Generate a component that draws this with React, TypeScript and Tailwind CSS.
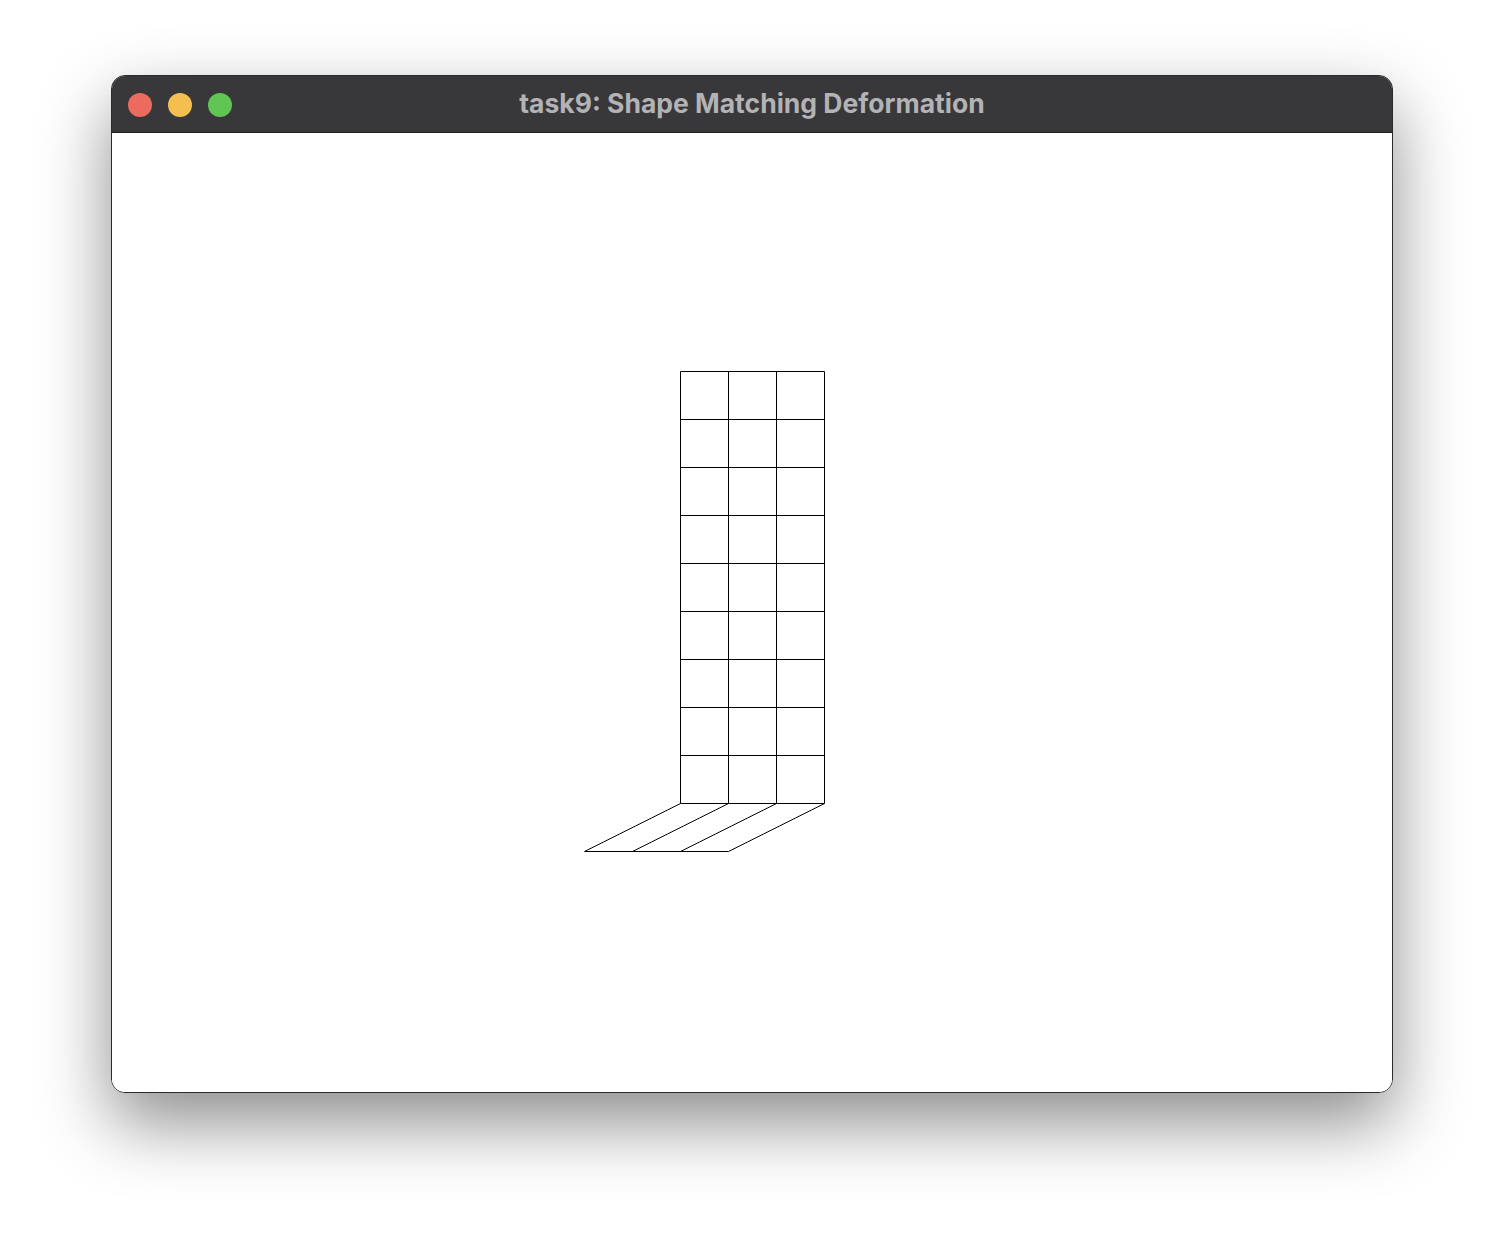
import * as React from 'react';

// Grid geometry, in the content area's own coordinates
const cell = 48;
const left = 568.5;
const top = 238.5;
const cols = 3;
const rows = 9;
const shearX = -96;

function Mesh() {
  const bottom = top + rows * cell;
  const lines: { x1: number; y1: number; x2: number; y2: number }[] = [];

  // Vertical lines of the upright part
  for (let i = 0; i <= cols; i++) {
    lines.push({ x1: left + i * cell, y1: top, x2: left + i * cell, y2: bottom });
  }
  // Horizontal lines
  for (let j = 0; j <= rows; j++) {
    lines.push({ x1: left, y1: top + j * cell, x2: left + cols * cell, y2: top + j * cell });
  }
  // Sheared bottom row
  for (let i = 0; i <= cols; i++) {
    lines.push({ x1: left + i * cell, y1: bottom, x2: left + i * cell + shearX, y2: bottom + cell });
  }
  lines.push({ x1: left + shearX, y1: bottom + cell, x2: left + shearX + cols * cell, y2: bottom + cell });

  return (
    <svg width="1280" height="958" viewBox="0 0 1280 958" className="block">
      {lines.map((l, i) => (
        <line key={i} x1={l.x1} y1={l.y1} x2={l.x2} y2={l.y2} stroke="#000" strokeWidth="1" />
      ))}
    </svg>
  );
}

export default function App() {
  return (
    <div className="min-h-screen w-full bg-white pt-[75px] pl-[111px]">
      <div className="w-[1282px] h-[1018px] rounded-[14px] border border-[#2a2a2c] bg-white overflow-hidden shadow-[0_30px_70px_rgba(0,0,0,0.45)] flex flex-col">
        {/* Title bar */}
        <div className="relative h-[57px] bg-[#38383a] border-b border-[#1e1e1e] flex items-center shrink-0">
          <div className="flex gap-4 pl-[16px] pt-px">
            <span className="w-6 h-6 rounded-full bg-[#ed6a5e]" />
            <span className="w-6 h-6 rounded-full bg-[#f5bf4f]" />
            <span className="w-6 h-6 rounded-full bg-[#61c554]" />
          </div>
          <div
            className="absolute inset-0 flex items-center justify-center text-[26.5px] font-bold text-[#b3b3b5]"
            style={{ fontFamily: 'Inter, "Noto Sans", sans-serif' }}
          >
            task9: Shape Matching Deformation
          </div>
        </div>
        {/* Content */}
        <div className="flex-1 bg-white">
          <Mesh />
        </div>
      </div>
    </div>
  );
}
